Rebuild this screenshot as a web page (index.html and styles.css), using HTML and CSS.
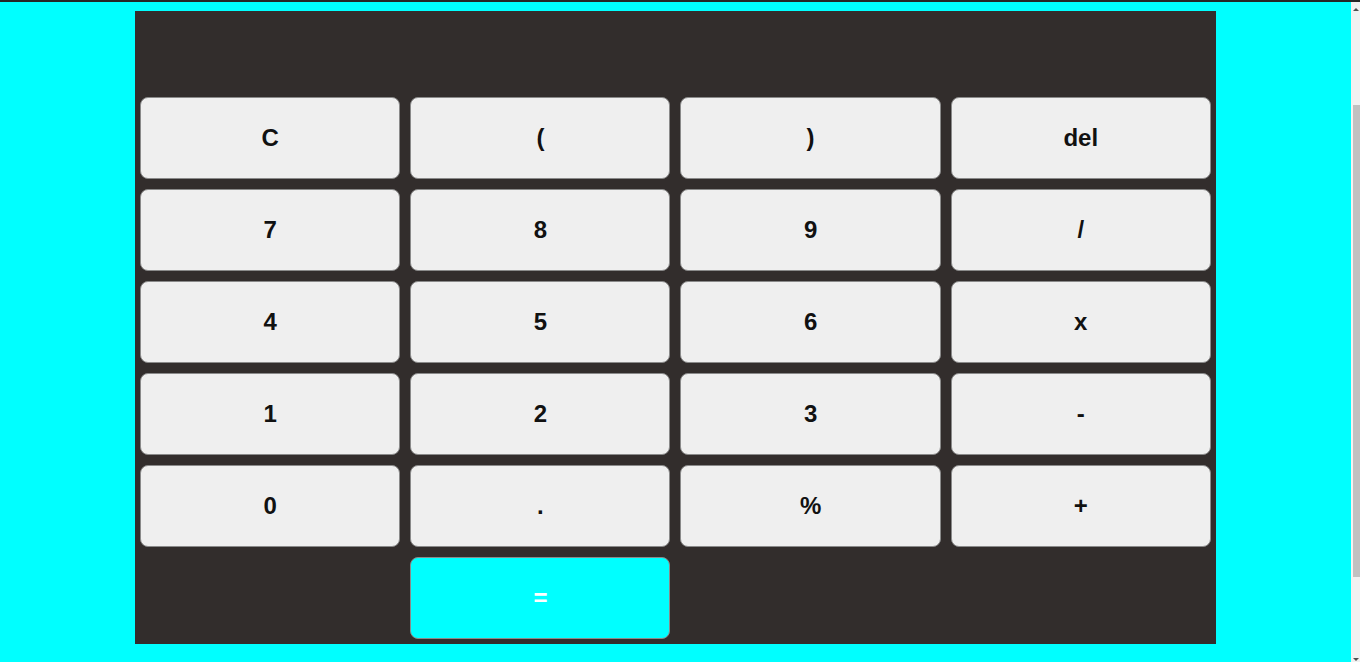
FILE: index.html
```html
<!DOCTYPE html>
<html lang="en">
<head>
<meta charset="utf-8">
<title>Calculator</title>
<link rel="stylesheet" href="styles.css">
</head>
<body>
<div class="topline"></div>
<div class="page">
  <div class="calculator">
    <div class="display"></div>
    <div class="keys">
      <button class="key">C</button>
      <button class="key">(</button>
      <button class="key">)</button>
      <button class="key">del</button>
      <button class="key">7</button>
      <button class="key">8</button>
      <button class="key">9</button>
      <button class="key">/</button>
      <button class="key">4</button>
      <button class="key">5</button>
      <button class="key">6</button>
      <button class="key">x</button>
      <button class="key">1</button>
      <button class="key">2</button>
      <button class="key">3</button>
      <button class="key">-</button>
      <button class="key">0</button>
      <button class="key">.</button>
      <button class="key">%</button>
      <button class="key">+</button>
      <button class="key key-equals">=</button>
    </div>
  </div>
</div>
<div class="scrollbar">
  <span class="arrow arrow-up"></span>
  <span class="thumb"></span>
  <span class="arrow arrow-down"></span>
</div>
</body>
</html>
```

FILE: styles.css
```css
html, body {
  margin: 0;
  padding: 0;
}

body {
  background: #00ffff;
  font-family: "Liberation Sans", Arial, sans-serif;
  overflow: hidden;
}

.topline {
  position: fixed;
  top: 0;
  left: 0;
  right: 0;
  height: 2px;
  background: #262626;
  z-index: 10;
}

.page {
  margin-right: 9px;
  padding: 11px 0 18px;
}

.calculator {
  width: 80%;
  margin: 0 auto;
  background: #322d2c;
  height: 633px;
}

.display {
  height: 81px;
}

.keys {
  display: grid;
  grid-template-columns: repeat(4, 1fr);
  grid-auto-rows: 92px;
}

.key {
  margin: 5px;
  border: 1px solid #8a8a8a;
  border-radius: 8px;
  background: #efefef;
  color: #111;
  font-family: "Liberation Sans", Arial, sans-serif;
  font-weight: bold;
  font-size: 24px;
  padding: 0;
}

.key-equals {
  grid-column: 2;
  background: #00ffff;
  color: #fff;
}

.scrollbar {
  position: fixed;
  top: 0;
  right: 0;
  bottom: 0;
  width: 9px;
  background: #f1f1f1;
}

.thumb {
  position: absolute;
  top: 105px;
  height: 472px;
  left: 2px;
  right: 0;
  background: #c1c1c1;
}

.arrow {
  position: absolute;
  left: 2px;
  width: 0;
  height: 0;
  border-left: 3px solid transparent;
  border-right: 3px solid transparent;
}

.arrow-up {
  top: 8px;
  border-bottom: 3px solid #505050;
}

.arrow-down {
  bottom: 1px;
  border-top: 3px solid #505050;
}
```
